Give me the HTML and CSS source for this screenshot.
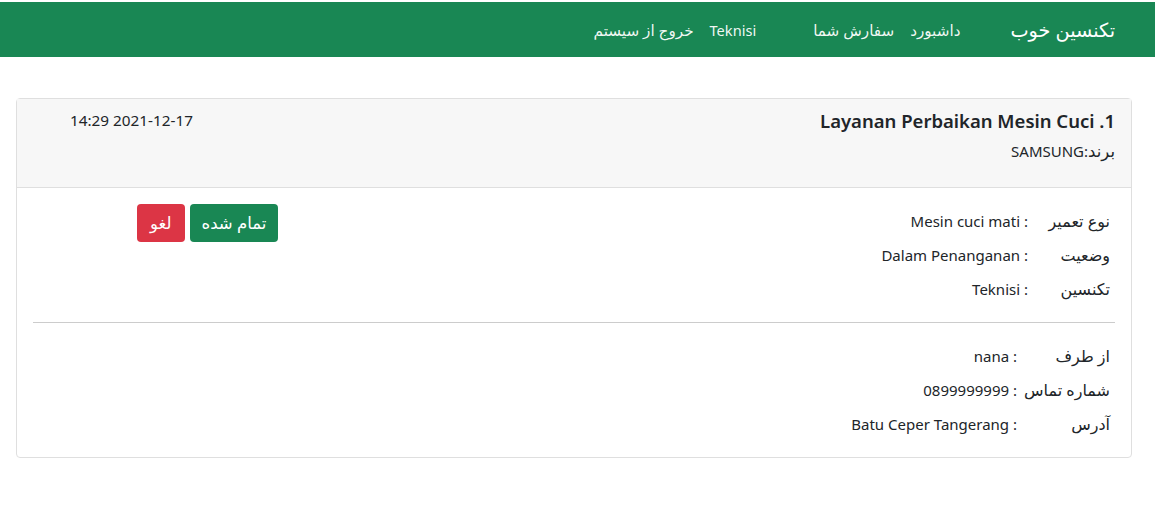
FILE: index.html
```html
<!DOCTYPE html>
<html lang="fa" dir="rtl">
<head>
<meta charset="utf-8">
<title>تکنسین خوب</title>
<link rel="stylesheet" href="styles.css">
</head>
<body>
<nav class="navbar">
  <a class="brand" href="#">تکنسین خوب</a>
  <ul class="nav">
    <li><a href="#">داشبورد</a></li>
    <li><a href="#">سفارش شما</a></li>
  </ul>
  <ul class="nav nav-user">
    <li><a href="#" class="latin">Teknisi</a></li>
    <li><a href="#">خروج از سیستم</a></li>
  </ul>
</nav>
<main class="page">
  <section class="card">
    <header class="card-header">
      <div class="head-main">
        <h5 class="title">1. Layanan Perbaikan Mesin Cuci</h5>
        <p class="brand-line"><span class="fa">برند</span>:SAMSUNG</p>
      </div>
      <div class="date">2021-12-17 14:29</div>
    </header>
    <div class="card-body">
      <div class="top-row">
        <table class="info info-a">
          <tr><td class="lbl">نوع تعمیر</td><td>: Mesin cuci mati</td></tr>
          <tr><td class="lbl">وضعیت</td><td>: Dalam Penanganan</td></tr>
          <tr><td class="lbl">تکنسین</td><td>: Teknisi</td></tr>
        </table>
        <div class="actions">
          <button class="btn btn-success">تمام شده</button>
          <button class="btn btn-danger">لغو</button>
        </div>
      </div>
      <hr class="divider">
      <table class="info info-b">
        <tr><td class="lbl">از طرف</td><td>: nana</td></tr>
        <tr><td class="lbl">شماره تماس</td><td>: 0899999999</td></tr>
        <tr><td class="lbl">آدرس</td><td>: Batu Ceper Tangerang</td></tr>
      </table>
    </div>
  </section>
</main>
</body>
</html>
```
FILE: styles.css
```css
* { box-sizing: border-box; }
html, body { margin: 0; padding: 0; }
body {
  font-family: "Noto Sans", "DejaVu Sans", sans-serif;
  font-size: 15px;
  line-height: 24px;
  color: #212529;
  background: #fff;
}
a { text-decoration: none; color: inherit; }
.fa { font-size: 16.5px; }

.navbar {
  margin-top: 2px;
  height: 55px;
  background: #198754;
  display: flex;
  align-items: center;
  padding: 0 40px 0 0;
}
.brand {
  color: #fff;
  font-size: 19.3px;
  margin-left: 42px;
}
.nav {
  list-style: none;
  margin: 0;
  padding: 0;
  display: flex;
}
.nav li a {
  display: block;
  padding: 0 8px;
  color: rgba(255,255,255,0.94);
  font-size: 15.2px;
}
.nav li a.latin { font-size: 14.6px; }
.nav-user { margin-right: 41px; }

.page { padding: 41px 23px 0 16px; }
.card {
  border: 1px solid #dfdfdf;
  border-radius: 4px;
}
.card-header {
  background: #f7f7f7;
  border-bottom: 1px solid #dfdfdf;
  padding: 8px 16px;
  display: flex;
  justify-content: space-between;
  align-items: flex-start;
  height: 89px;
}
.title {
  margin: 2px 0 6px;
  font-size: 18.5px;
  font-weight: 600;
  line-height: 24px;
}
.brand-line { margin: 0; font-size: 15px; }
.date { margin-left: 37px; margin-top: 1px; font-size: 15.3px; }

.card-body { padding: 16px; }
.top-row { display: flex; justify-content: space-between; align-items: flex-start; }
.info { border-collapse: collapse; }
.info td { padding: 5px 0; white-space: nowrap; }
.info .lbl { padding-right: 5px; font-size: 16px; }
.info-a .lbl { width: 87px; }
.info-b .lbl { width: 98px; }
.actions { display: flex; gap: 5px; margin-left: 104px; }
.btn {
  font-family: inherit;
  font-size: 16.5px;
  line-height: 24px;
  color: #fff;
  border: 0;
  border-radius: 4px;
  padding: 7px 12px;
  height: 38px;
}
.btn-success { background: #198754; }
.btn-danger { background: #dc3545; padding: 7px 13px; }
.divider {
  border: 0;
  border-top: 1px solid #ccc;
  margin: 16px 0;
}
```
